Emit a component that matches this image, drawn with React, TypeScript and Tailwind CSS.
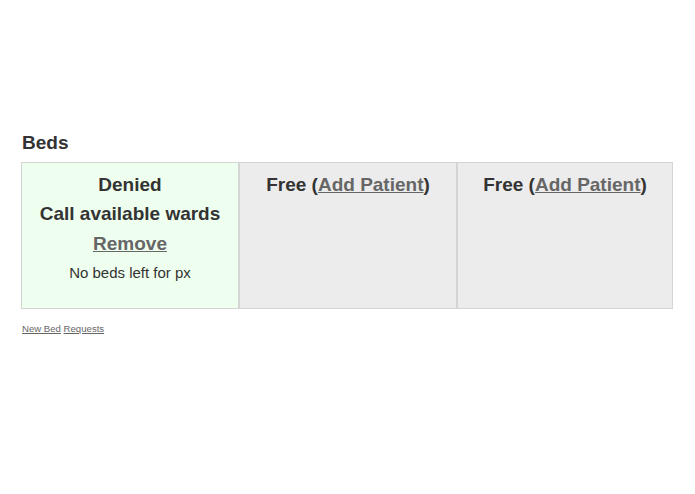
export default function App() {
  return (
    <div className="min-h-screen bg-white px-[21px] pt-[130px] font-['Liberation_Sans',Arial,sans-serif] text-[#333]">
      <h2 className="pl-px text-[19px] font-bold leading-[26px]">Beds</h2>
      <div className="mt-[6px] flex w-[652px] border border-[#d4d4d4]">
        <div className="flex h-[145px] w-[216px] flex-col items-center bg-[#efffef] pt-[7px] text-center">
          <div className="text-[19px] font-bold leading-[29px]">Denied</div>
          <div className="text-[19px] font-bold leading-[29px]">Call available wards</div>
          <a href="#" className="text-[19px] font-bold leading-[31px] text-[#666] underline">
            Remove
          </a>
          <div className="text-[15px] leading-[28px]">No beds left for px</div>
        </div>
        <div className="w-[218px] border-l-2 border-[#d4d4d4] bg-[#ececec] pt-[7px] text-center">
          <span className="text-[19px] font-bold leading-[29px]">
            Free (<a href="#" className="text-[#666] underline">Add Patient</a>)
          </span>
        </div>
        <div className="flex-1 border-l-2 border-[#d4d4d4] bg-[#ececec] pt-[7px] text-center">
          <span className="text-[19px] font-bold leading-[29px]">
            Free (<a href="#" className="text-[#666] underline">Add Patient</a>)
          </span>
        </div>
      </div>
      <div className="mt-[14px] pl-px text-[9.6px] leading-[12px] text-[#666]">
        <a href="#" className="underline">New Bed</a>{' '}
        <a href="#" className="underline">Requests</a>
      </div>
    </div>
  );
}
